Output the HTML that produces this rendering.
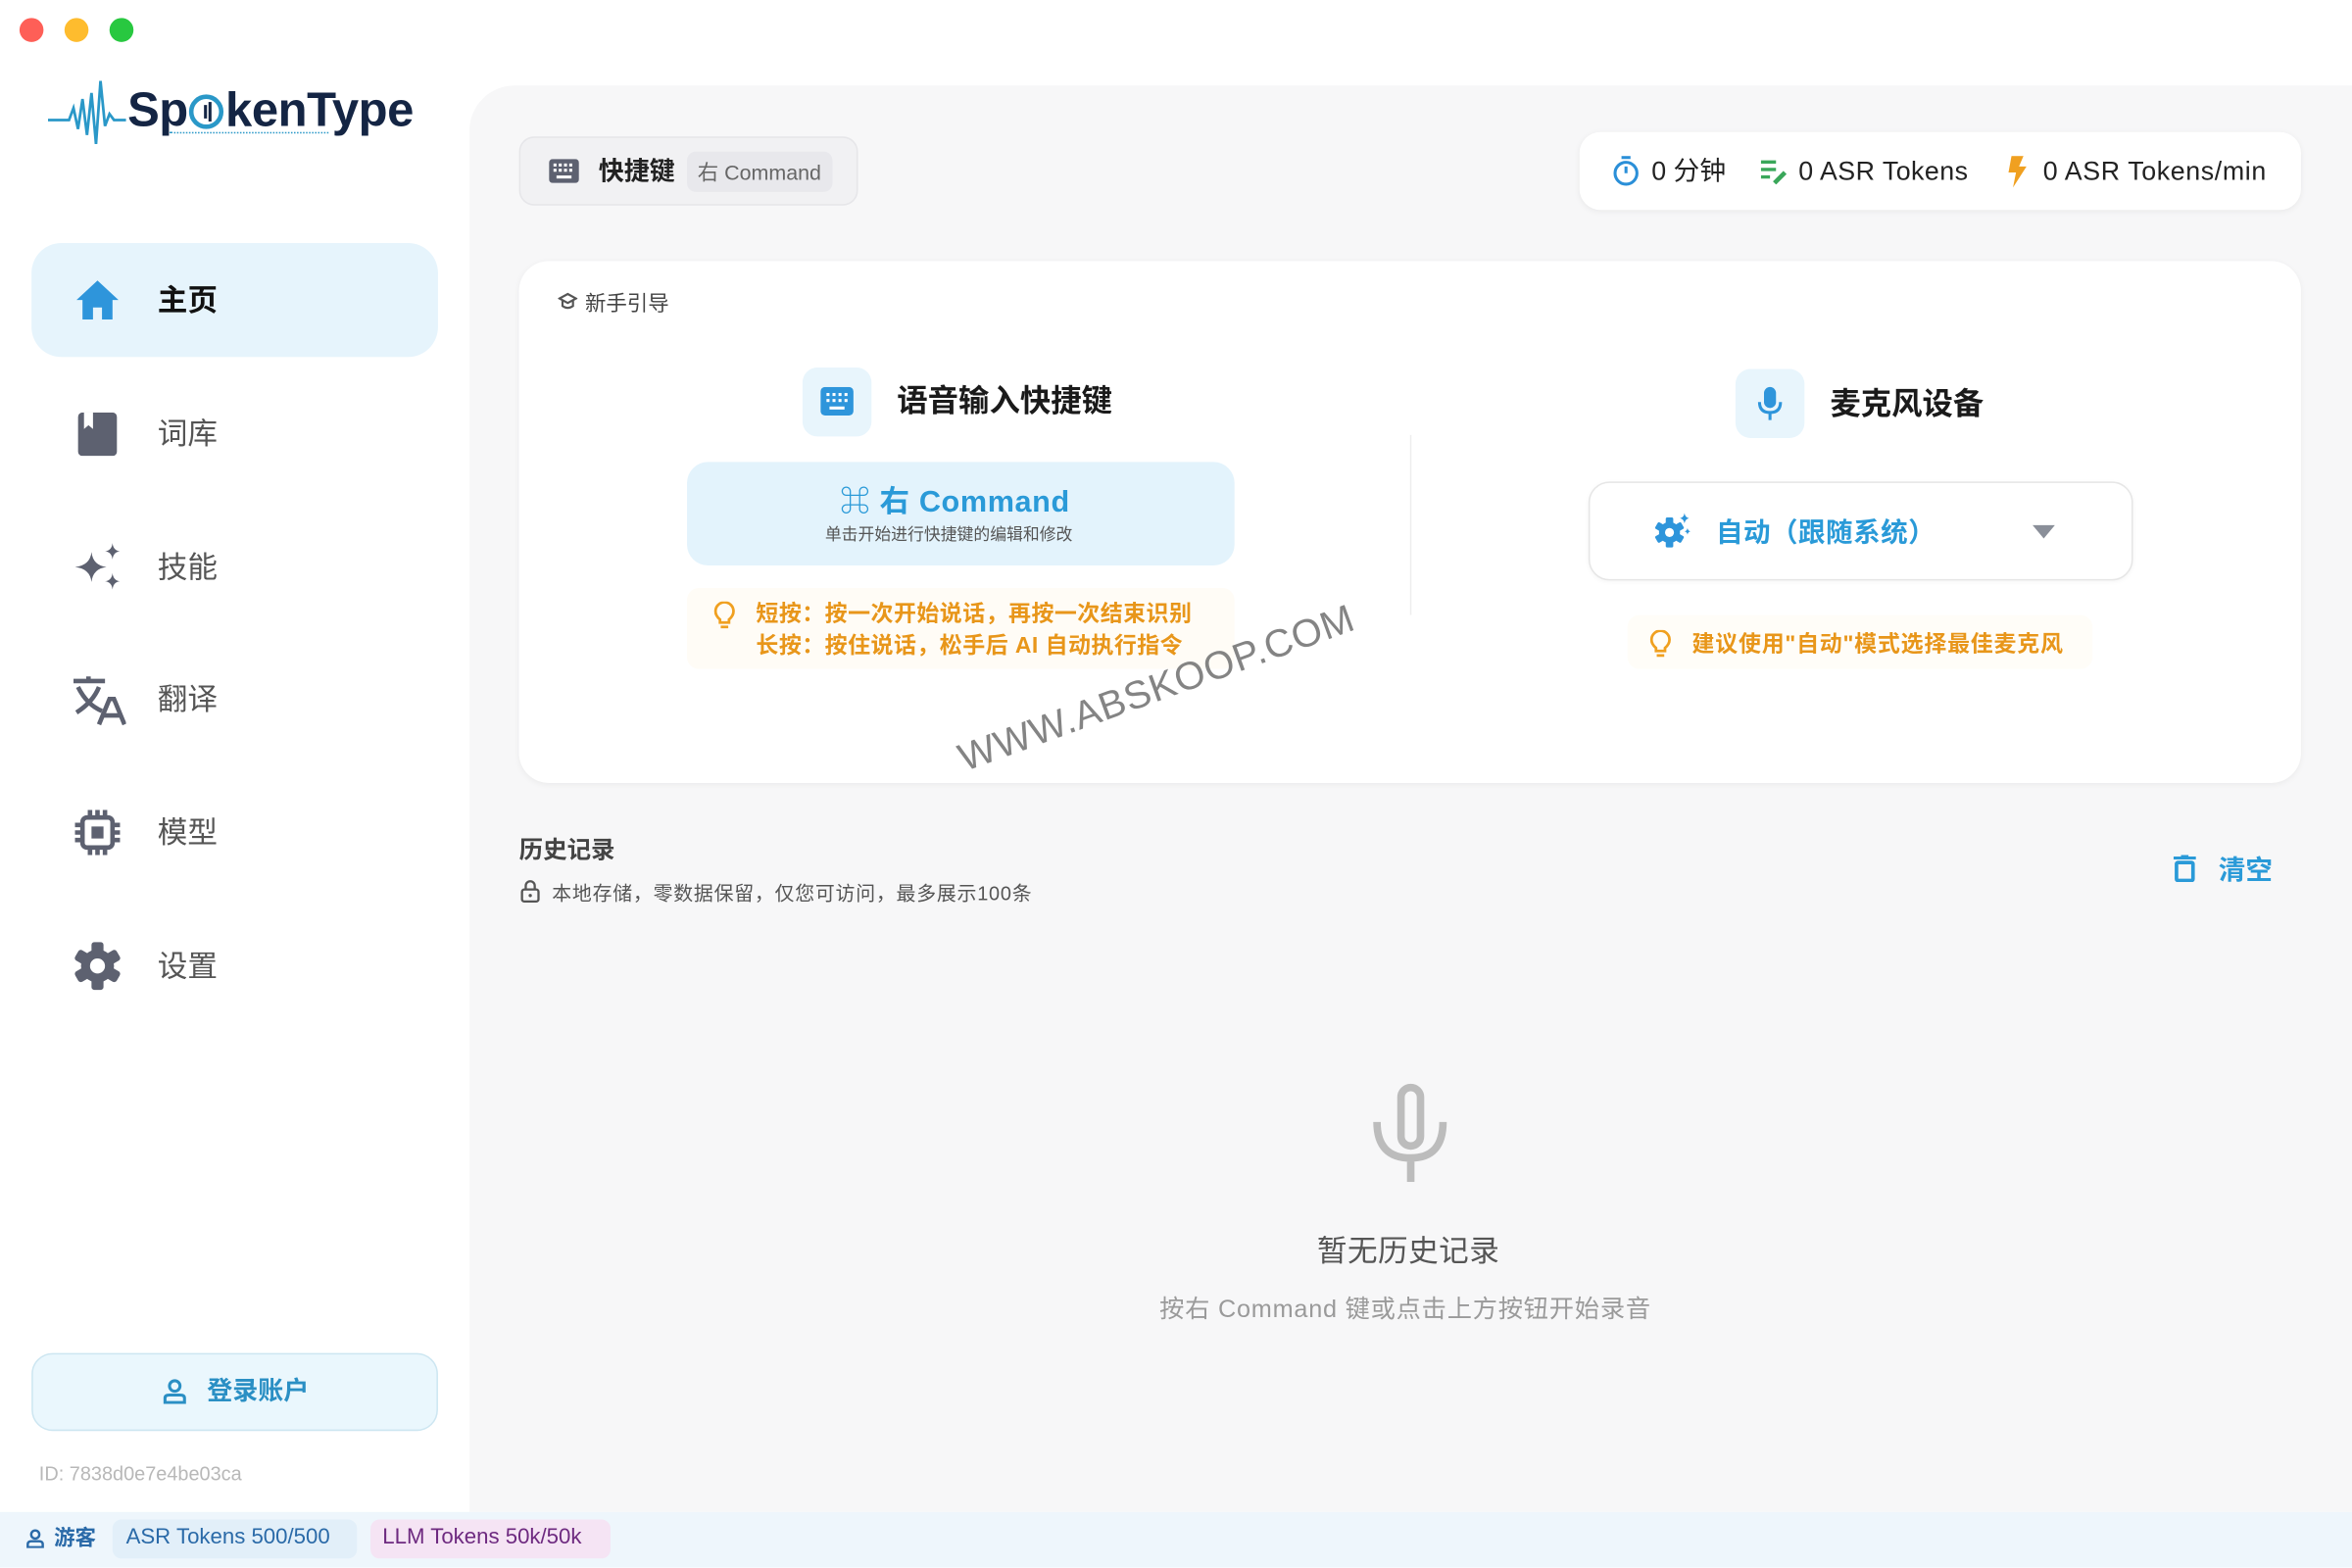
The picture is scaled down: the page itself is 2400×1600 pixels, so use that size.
<!DOCTYPE html>
<html><head><meta charset="utf-8">
<style>
*{margin:0;padding:0;box-sizing:border-box}
html,body{width:2400px;height:1600px;overflow:hidden;background:#fff}
#s{position:absolute;left:0;top:0;width:1568px;height:1045px;transform:scale(1.530612);transform-origin:0 0;font-family:"Liberation Sans","Noto Sans CJK SC",sans-serif;color:#222;background:#fff}
.a{position:absolute}
.t{position:absolute;white-space:nowrap;line-height:1}
.nav{position:absolute;left:21px;width:271px;height:76px;border-radius:20px}
.nt{position:absolute;left:105px;font-size:20px;color:#555;line-height:1;white-space:nowrap}
</style></head><body><div id="s">
<div class="a" style="left:13px;top:12px;width:16px;height:16px;border-radius:50%;background:#fe5f57"></div>
<div class="a" style="left:43px;top:12px;width:16px;height:16px;border-radius:50%;background:#febc2e"></div>
<div class="a" style="left:73px;top:12px;width:16px;height:16px;border-radius:50%;background:#28c840"></div>

<svg class="a" style="left:32px;top:50px" width="60" height="50" viewBox="0 0 60 50"><path d="M0 30 H14 L17 22 L20 36 L23 16 L26 40 L29 12 L32 46 L35 4 L38 34 L41 26 L44 30 H52" fill="none" stroke="#2a98c8" stroke-width="1.8"/></svg>
<div class="t" style="left:85px;top:57px;font-size:32px;font-weight:bold;color:#142544;letter-spacing:-0.3px">Sp<span style="display:inline-block;width:23px;height:23px;border:3px solid #2a98c8;border-radius:50%;vertical-align:-2px;margin:0 1px;position:relative"><span style="position:absolute;left:7px;top:4px;width:1.5px;height:9px;background:#142544"></span><span style="position:absolute;left:10px;top:2px;width:1.5px;height:13px;background:#142544"></span></span>kenType</div>
<div class="a" style="left:113px;top:88px;width:106px;border-top:1.5px dotted #2a98c8"></div>

<div class="a" style="left:313px;top:57px;width:1255px;height:951px;background:#f7f7f8;border-top-left-radius:30px"></div>

<div class="nav" style="top:162px;background:#e6f4fc"></div>
<svg class="a" style="left:50px;top:186px" width="30" height="28" viewBox="0 0 30 28"><path d="M15 1 L29 14 H25 V27 H18 V19 H12 V27 H5 V14 H1 Z" fill="#2e95db"/></svg>
<div class="nt" style="top:191px;color:#111;font-weight:bold">主页</div>

<svg class="a" style="left:52px;top:275px" width="26" height="29" viewBox="0 0 26 29"><rect x="0" y="0" width="26" height="29" rx="3" fill="#5d6170"/><path d="M4 0 V11 L7 8.5 L10 11 V0 Z" fill="#fff"/></svg>
<div class="nt" style="top:280px">词库</div>

<svg class="a" style="left:49px;top:362px" width="34" height="32" viewBox="0 0 34 32"><path d="M12 6 Q13 15 22 16 Q13 17 12 26 Q11 17 1 16 Q11 15 12 6Z M26 0 Q26.5 5 31 5.5 Q26.5 6 26 11 Q25.5 6 21 5.5 Q25.5 5 26 0Z M26 20 Q26.5 25 31 25.5 Q26.5 26 26 31 Q25.5 26 21 25.5 Q25.5 25 26 20Z" fill="#5d6170"/></svg>
<div class="nt" style="top:369px">技能</div>

<svg class="a" style="left:48px;top:450px" width="36" height="34" viewBox="0 0 36 34"><path d="M1 4 H22 M11 1 V4 M4 8 Q10 20 20 24 M18 8 Q14 18 3 25" fill="none" stroke="#5d6170" stroke-width="3"/><path d="M18 33 L25 16 H28 L35 33 M21 27 H32" fill="none" stroke="#5d6170" stroke-width="3"/></svg>
<div class="nt" style="top:457px">翻译</div>

<svg class="a" style="left:50px;top:540px" width="30" height="30" viewBox="0 0 30 30"><rect x="5" y="5" width="20" height="20" rx="3" fill="none" stroke="#5d6170" stroke-width="3"/><rect x="11" y="11" width="8" height="8" fill="#5d6170"/><path d="M10 0V5M15 0V5M20 0V5M10 25V30M15 25V30M20 25V30M0 10H5M0 15H5M0 20H5M25 10H30M25 15H30M25 20H30" stroke="#5d6170" stroke-width="3"/></svg>
<div class="nt" style="top:546px">模型</div>

<svg class="a" style="left:49px;top:628px" width="32" height="32" viewBox="0 0 32 32"><g fill="#5d6170"><circle cx="16" cy="16" r="11"/><rect x="12" y="0" width="8" height="32" rx="2"/><rect x="12" y="0" width="8" height="32" rx="2" transform="rotate(60 16 16)"/><rect x="12" y="0" width="8" height="32" rx="2" transform="rotate(120 16 16)"/></g><circle cx="16" cy="16" r="5" fill="#fff"/></svg>
<div class="nt" style="top:635px">设置</div>

<div class="a" style="left:21px;top:902px;width:271px;height:52px;border-radius:14px;background:#eaf7fd;border:1px solid #cde6f1"></div>
<svg class="a" style="left:108px;top:919px" width="17" height="17" viewBox="0 0 17 17"><circle cx="8.5" cy="5" r="3.5" fill="none" stroke="#2a8fc4" stroke-width="2"/><path d="M2 16 V13 Q2 11 5 11 H12 Q15 11 15 13 V16Z" fill="none" stroke="#2a8fc4" stroke-width="2"/></svg>
<div class="t" style="left:138px;top:919px;font-size:17px;font-weight:bold;color:#2a8fc4">登录账户</div>
<div class="t" style="left:26px;top:976px;font-size:13px;color:#b8b8b8">ID: 7838d0e7e4be03ca</div>

<div class="a" style="left:0;top:1008px;width:1568px;height:37px;background:#eef6fc"></div>
<svg class="a" style="left:17px;top:1019px" width="13" height="13" viewBox="0 0 13 13"><circle cx="6.5" cy="4" r="2.7" fill="none" stroke="#2a6aa8" stroke-width="1.6"/><path d="M1.5 12.5V10.5Q1.5 8.5 4 8.5H9Q11.5 8.5 11.5 10.5V12.5Z" fill="none" stroke="#2a6aa8" stroke-width="1.6"/></svg>
<div class="t" style="left:36px;top:1018px;font-size:14px;font-weight:bold;color:#2a6aa8">游客</div>
<div class="a" style="left:75px;top:1013px;width:163px;height:26px;border-radius:6px;background:#e2eff9"></div>
<div class="t" style="left:84px;top:1018px;font-size:14.5px;color:#2a6aa8">ASR Tokens 500/500</div>
<div class="a" style="left:247px;top:1013px;width:160px;height:26px;border-radius:6px;background:#f5e4f4"></div>
<div class="t" style="left:255px;top:1018px;font-size:14.5px;color:#6e2a80">LLM Tokens 50k/50k</div>

<div class="a" style="left:346px;top:91px;width:226px;height:46px;border-radius:10px;background:#f1f1f3;border:1px solid #e6e6e9"></div>
<svg class="a" style="left:366px;top:106px" width="20" height="16" viewBox="0 0 20 16"><rect width="20" height="16" rx="2.5" fill="#5d6170"/><g fill="#fff"><rect x="3" y="3" width="2" height="2"/><rect x="6.5" y="3" width="2" height="2"/><rect x="10" y="3" width="2" height="2"/><rect x="13.5" y="3" width="2" height="2"/><rect x="3" y="6.5" width="2" height="2"/><rect x="6.5" y="6.5" width="2" height="2"/><rect x="10" y="6.5" width="2" height="2"/><rect x="13.5" y="6.5" width="2" height="2"/><rect x="5" y="11" width="10" height="2"/></g></svg>
<div class="t" style="left:399px;top:106px;font-size:17px;font-weight:bold;color:#222">快捷键</div>
<div class="a" style="left:458px;top:101px;width:97px;height:27px;border-radius:6px;background:#e8e8ec"></div>
<div class="t" style="left:465px;top:108px;font-size:14px;color:#666">右 Command</div>

<div class="a" style="left:1053px;top:88px;width:481px;height:52px;border-radius:14px;background:#fff;box-shadow:0 1px 4px rgba(0,0,0,0.06)"></div>
<svg class="a" style="left:1075px;top:104px" width="18" height="20" viewBox="0 0 18 20"><circle cx="9" cy="11.5" r="7.3" fill="none" stroke="#2a8fd8" stroke-width="2"/><path d="M6 1H12M9 11.5V7" stroke="#2a8fd8" stroke-width="2"/></svg>
<div class="t" style="left:1101px;top:106px;font-size:17.5px;color:#222">0 分钟</div>
<svg class="a" style="left:1173px;top:106px" width="20" height="17" viewBox="0 0 20 17"><path d="M1 2H11M1 7H11M1 12H7" stroke="#3aa75a" stroke-width="2.2"/><path d="M10 16L17 9" stroke="#3aa75a" stroke-width="3"/></svg>
<div class="t" style="left:1199px;top:106px;font-size:17.5px;color:#222;letter-spacing:0.3px">0 ASR Tokens</div>
<svg class="a" style="left:1338px;top:104px" width="14" height="21" viewBox="0 0 14 21"><path d="M3 0H11L8 7H13L4 21L6 11H1Z" fill="#f0a020"/></svg>
<div class="t" style="left:1362px;top:106px;font-size:17.5px;color:#222;letter-spacing:0.4px">0 ASR Tokens/min</div>

<div class="a" style="left:346px;top:174px;width:1188px;height:348px;border-radius:20px;background:#fff;box-shadow:0 1px 4px rgba(0,0,0,0.05)"></div>
<svg class="a" style="left:372px;top:195px" width="13" height="12" viewBox="0 0 13 12"><path d="M6.5 1L12 4L6.5 7L1 4Z M3 5.5V9Q6.5 11.5 10 9V5.5" fill="none" stroke="#555" stroke-width="1.4"/></svg>
<div class="t" style="left:390px;top:195px;font-size:14px;color:#444">新手引导</div>

<div class="a" style="left:535px;top:245px;width:46px;height:46px;border-radius:10px;background:#e8f5fc"></div>
<svg class="a" style="left:547px;top:258px" width="22" height="19" viewBox="0 0 22 19"><rect width="22" height="19" rx="3" fill="#2e95db"/><g fill="#fff"><rect x="4" y="4" width="2" height="2"/><rect x="8" y="4" width="2" height="2"/><rect x="12" y="4" width="2" height="2"/><rect x="16" y="4" width="2" height="2"/><rect x="4" y="8" width="2" height="2"/><rect x="8" y="8" width="2" height="2"/><rect x="12" y="8" width="2" height="2"/><rect x="16" y="8" width="2" height="2"/><rect x="6" y="13" width="10" height="2"/></g></svg>
<div class="t" style="left:598px;top:258px;font-size:20.5px;font-weight:bold;color:#1a1a1a">语音输入快捷键</div>

<div class="a" style="left:458px;top:308px;width:365px;height:69px;border-radius:14px;background:#e3f3fc"></div>
<div class="t" style="left:560px;top:325px;font-size:20px;font-weight:bold;color:#2a9ad8;letter-spacing:0.4px">⌘ 右 Command</div>
<div class="t" style="left:550px;top:352px;font-size:11px;color:#555">单击开始进行快捷键的编辑和修改</div>

<div class="a" style="left:458px;top:392px;width:365px;height:54px;border-radius:8px;background:#fffcf6"></div>
<svg class="a" style="left:476px;top:401px" width="14" height="19" viewBox="0 0 14 19"><path d="M4 12Q1 9.5 1 6.5A6 6 0 0 1 13 6.5Q13 9.5 10 12V14H4Z" fill="none" stroke="#f0a020" stroke-width="1.8"/><path d="M4.5 17H9.5" stroke="#f0a020" stroke-width="1.8"/></svg>
<div class="t" style="left:504px;top:402px;font-size:15px;font-weight:bold;color:#e8961a;letter-spacing:0.3px">短按：按一次开始说话，再按一次结束识别</div>
<div class="t" style="left:504px;top:423px;font-size:15px;font-weight:bold;color:#e8961a;letter-spacing:0.3px">长按：按住说话，松手后 AI 自动执行指令</div>

<div class="a" style="left:940px;top:290px;width:1px;height:120px;background:#eeeeee"></div>

<div class="a" style="left:1157px;top:246px;width:46px;height:46px;border-radius:10px;background:#e8f5fc"></div>
<svg class="a" style="left:1171px;top:257px" width="18" height="24" viewBox="0 0 18 24"><rect x="5" y="1" width="8" height="14" rx="4" fill="#2e95db"/><path d="M2 11Q2 18 9 18Q16 18 16 11M9 18V23" fill="none" stroke="#2e95db" stroke-width="2"/></svg>
<div class="t" style="left:1220px;top:260px;font-size:20.5px;font-weight:bold;color:#1a1a1a">麦克风设备</div>

<div class="a" style="left:1059px;top:321px;width:363px;height:66px;border-radius:14px;background:#fff;border:1.5px solid #e6e6e6;box-shadow:0 1px 3px rgba(0,0,0,0.04)"></div>
<svg class="a" style="left:1102px;top:342px" width="26" height="24" viewBox="0 0 26 24"><g fill="#2e95db"><circle cx="11" cy="13" r="7"/><rect x="8.5" y="3" width="5" height="20" rx="1"/><rect x="8.5" y="3" width="5" height="20" rx="1" transform="rotate(60 11 13)"/><rect x="8.5" y="3" width="5" height="20" rx="1" transform="rotate(120 11 13)"/><path d="M21 0Q21.4 3 24 3.5Q21.4 4 21 7Q20.6 4 18 3.5Q20.6 3 21 0Z"/><path d="M23 10Q23.3 12 25 12.3Q23.3 12.6 23 14.5Q22.7 12.6 21 12.3Q22.7 12 23 10Z"/></g><circle cx="11" cy="13" r="3" fill="#fff"/></svg>
<div class="t" style="left:1144px;top:346px;font-size:18px;font-weight:bold;color:#2a9ad8;letter-spacing:0.3px">自动（跟随系统）</div>
<svg class="a" style="left:1355px;top:350px" width="15" height="9" viewBox="0 0 15 9"><path d="M0 0H15L7.5 9Z" fill="#8a8f99"/></svg>

<div class="a" style="left:1085px;top:410px;width:310px;height:36px;border-radius:8px;background:#fffdf8"></div>
<svg class="a" style="left:1100px;top:420px" width="14" height="19" viewBox="0 0 14 19"><path d="M4 12Q1 9.5 1 6.5A6 6 0 0 1 13 6.5Q13 9.5 10 12V14H4Z" fill="none" stroke="#f0a020" stroke-width="1.8"/><path d="M4.5 17H9.5" stroke="#f0a020" stroke-width="1.8"/></svg>
<div class="t" style="left:1128px;top:422px;font-size:15px;font-weight:bold;color:#e8961a;letter-spacing:0.5px">建议使用"自动"模式选择最佳麦克风</div>

<div class="t" style="left:640px;top:493px;font-size:26px;color:rgba(110,110,110,0.85);transform:rotate(-20deg);transform-origin:0 50%;letter-spacing:0.5px">WWW.ABSKOOP.COM</div>

<div class="t" style="left:346px;top:560px;font-size:16px;font-weight:bold;color:#444">历史记录</div>
<svg class="a" style="left:347px;top:586px" width="13" height="16" viewBox="0 0 13 16"><rect x="1" y="7" width="11" height="8" rx="1.5" fill="none" stroke="#555" stroke-width="1.5"/><path d="M3.5 7V4.5A3 3 0 0 1 9.5 4.5V7" fill="none" stroke="#555" stroke-width="1.5"/><circle cx="6.5" cy="11" r="1.1" fill="#555"/></svg>
<div class="t" style="left:368px;top:589px;font-size:13px;color:#555;letter-spacing:0.5px">本地存储，零数据保留，仅您可访问，最多展示100条</div>
<svg class="a" style="left:1449px;top:570px" width="15" height="18" viewBox="0 0 15 18"><path d="M0 2H15M5 0H10" stroke="#2a9ad8" stroke-width="2"/><rect x="2" y="5" width="11" height="12" rx="1" fill="none" stroke="#2a9ad8" stroke-width="2.4"/></svg>
<div class="t" style="left:1479px;top:571px;font-size:18px;font-weight:bold;color:#2a9ad8">清空</div>

<svg class="a" style="left:914px;top:722px" width="52" height="66" viewBox="0 0 52 66"><rect x="20" y="3" width="13" height="39" rx="6.5" fill="none" stroke="#bcbcbc" stroke-width="5"/><path d="M4 26Q4 50 26.5 50Q48 50 48 26M26.5 50V66" fill="none" stroke="#bcbcbc" stroke-width="5"/></svg>
<div class="t" style="left:878px;top:825px;font-size:20px;color:#555;letter-spacing:0.3px">暂无历史记录</div>
<div class="t" style="left:773px;top:865px;font-size:16.5px;color:#9a9a9a;letter-spacing:0.5px">按右 Command 键或点击上方按钮开始录音</div>
</div></body></html>
